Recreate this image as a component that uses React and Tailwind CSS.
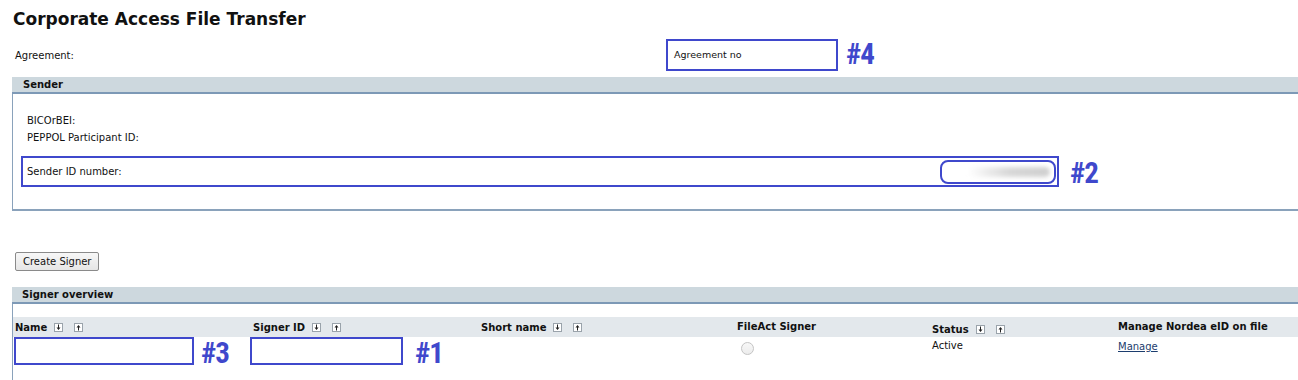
import React from "react";

const F = { fontFamily: '"DejaVu Sans", Verdana, sans-serif' };

function SortIcons() {
  return (
    <span className="inline-flex items-center gap-[11px] ml-[7px]">
      <span className="w-[9px] h-[9px] border border-[#9aa3ab] bg-white flex items-center justify-center">
        <svg width="7" height="7" viewBox="0 0 7 7">
          <path d="M3 0.5h1v3h1.5L3.5 6 1.5 3.5H3z" fill="#222" />
        </svg>
      </span>
      <span className="w-[9px] h-[9px] border border-[#9aa3ab] bg-white flex items-center justify-center">
        <svg width="7" height="7" viewBox="0 0 7 7">
          <path d="M3 6.5h1v-3h1.5L3.5 1 1.5 3.5H3z" fill="#222" />
        </svg>
      </span>
    </span>
  );
}

function Tag({ children }) {
  return (
    <span
      className="text-[#3f48cc] font-bold text-[29px] leading-none tracking-[-1px]"
      style={{ fontFamily: '"Liberation Sans Narrow", "Roboto Condensed", "Liberation Sans", Arial, sans-serif' }}
    >
      {children}
    </span>
  );
}

export default function App() {
  return (
    <div className="w-[1298px] h-[380px] bg-white overflow-hidden text-[10px] text-[#111]" style={F}>
      {/* Title */}
      <div className="pl-[13px] pt-[8px] h-[37px] text-[17px] font-bold leading-[22px] text-[#111]">
        Corporate Access File Transfer
      </div>

      {/* Agreement row */}
      <div className="flex items-center h-[34px] mt-[1px]">
        <div className="w-[666px] pl-[15px]">Agreement:</div>
        <div className="w-[172px] h-[32px] border-2 border-[#3f48cc] flex items-center pl-[6px] text-[9.5px]">
          Agreement no
        </div>
        <div className="ml-[8px] mt-[-2px]">
          <Tag>#4</Tag>
        </div>
      </div>

      {/* Sender panel */}
      <div className="ml-[12px] mt-[5px]">
        <div className="h-[15px] bg-[#cdd8de] border-b-2 border-[#7d99b6] pl-[11px] font-bold leading-[15px] box-content">
          Sender
        </div>
        <div className="border-l border-b-2 border-[#8aa2bb] h-[117px] pt-[18px]">
          <div className="pl-[14px] leading-[17px]">BICOrBEI:</div>
          <div className="pl-[14px] leading-[17px]">PEPPOL Participant ID:</div>
          <div className="ml-[8px] mt-[10px] w-[1038px] h-[31px] border-2 border-[#3f48cc] flex items-center pl-[4px] relative">
            <span className="flex-1">Sender ID number:</span>
            <div className="w-[116px] h-[24px] mr-[1px] border-2 border-[#3f48cc] rounded-[8px] bg-white overflow-hidden flex items-center">
              <div className="ml-[26px] w-[82px] h-[10px] rounded-full bg-gradient-to-r from-white via-[#d8d8d8] to-[#cfcfcf] blur-[2px]" />
            </div>
            <div className="absolute left-[1047px] top-[1px]">
              <Tag>#2</Tag>
            </div>
          </div>
        </div>
      </div>

      {/* Create Signer */}
      <div className="pl-[15px] mt-[41px]">
        <button className="h-[19px] px-[7px] border border-[#8a8a8a] rounded-[2px] bg-gradient-to-b from-[#f7f7f7] to-[#e6e6e6] text-[10px] leading-[16px] text-[#111]">
          Create Signer
        </button>
      </div>

      {/* Signer overview panel */}
      <div className="ml-[12px] mt-[16px]">
        <div className="h-[15px] bg-[#cdd8de] border-b-2 border-[#7d99b6] pl-[10px] font-bold leading-[15px] box-content">
          Signer overview
        </div>
        <div className="border-l border-[#8aa2bb] h-[120px] pt-[13px]">
          <div
            className="grid h-[20px] bg-[#e3e8ec] font-bold items-center"
            style={{ gridTemplateColumns: "240px 228px 255px 196px 186px 1fr" }}
          >
            <div className="pl-[2px] flex items-center pt-[1px]">Name<SortIcons /></div>
            <div className="flex items-center pt-[1px]">Signer ID<SortIcons /></div>
            <div className="flex items-center pt-[1px]">Short name<SortIcons /></div>
            <div className="self-start pt-[2px] pl-[1px]">FileAct Signer</div>
            <div className="flex items-center pt-[4px]">Status<SortIcons /></div>
            <div className="self-start pt-[2px]">Manage Nordea eID on file</div>
          </div>
          <div
            className="grid"
            style={{ gridTemplateColumns: "240px 228px 255px 196px 186px 1fr" }}
          >
            <div className="flex items-start">
              <div className="ml-[1px] w-[180px] h-[28px] border-2 border-[#3f48cc]" />
              <div className="ml-[7px] mt-[2px]"><Tag>#3</Tag></div>
            </div>
            <div className="flex items-start">
              <div className="ml-[-3px] w-[153px] h-[28px] border-2 border-[#3f48cc]" />
              <div className="ml-[12px] mt-[2px]"><Tag>#1</Tag></div>
            </div>
            <div />
            <div className="pl-[5px] pt-[5px]">
              <div className="w-[13px] h-[13px] rounded-full border border-[#c4c4c4] bg-gradient-to-b from-[#f8f8f8] to-[#ececec]" />
            </div>
            <div className="pt-[2px] leading-[14px]">Active</div>
            <div className="pt-[3px] leading-[14px]">
              <a className="underline text-[#1c3d6e]" href="#">Manage</a>
            </div>
          </div>
        </div>
      </div>
    </div>
  );
}
